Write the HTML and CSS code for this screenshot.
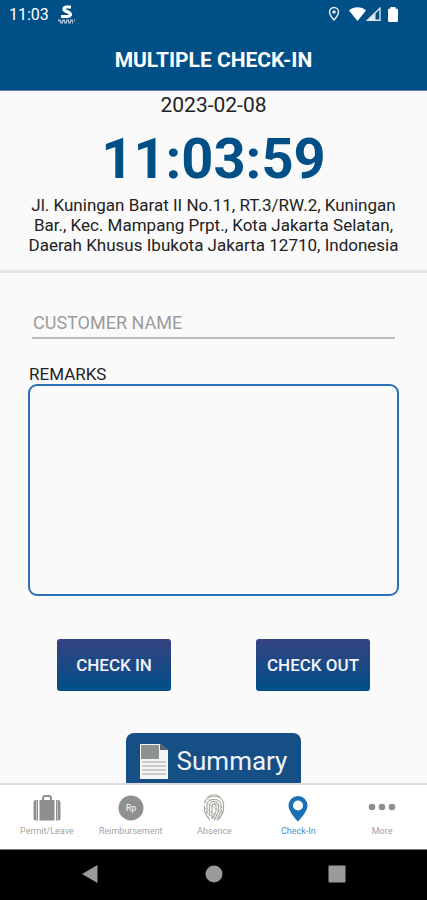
FILE: index.html
```html
<!DOCTYPE html>
<html lang="en">

<head>
  <meta charset="UTF-8">
  <meta name="viewport" content="width=device-width, initial-scale=1.0">
  <title>Multiple Check-In</title>

  <link rel="stylesheet" href="styles.css">
</head>

<body>
  <header>
    <div class="status-bar">
      <span>11:03</span>
      <svg class="app-logo" width="18" height="20" viewBox="0 0 18 20">
        <path d="M13 3H8.500C5.500 3 5 6 8 7.200L11 8.500C13.500 10 12.500 12.500 9.500 12.500H3" fill="none" stroke="#fff" stroke-width="3.200" />
        <path d="M0 16.500h17M2 18.500h13" stroke="#9fb8d3" stroke-width="2" stroke-dasharray="3 1" />
      </svg>
      <div class="status-icons">
        <svg width="12" height="16" viewBox="0 0 12 16">
          <path d="M6 1.500a4.500 4.500 0 0 0-4.500 4.500C1.500 9 6 14 6 14s4.500-5 4.500-8A4.500 4.500 0 0 0 6 1.500z" fill="none" stroke="#e3ebf3" stroke-width="1.500" />
          <circle cx="6" cy="6" r="1.800" fill="#e3ebf3" />
        </svg>
        <svg class="wifi" width="17" height="14" viewBox="0 0 17 14">
          <path d="M8.500 14L0 3.500C4.500-.8 12.500-.8 17 3.500z" fill="#fff" />
        </svg>
        <svg width="15" height="14" viewBox="0 0 15 14">
          <path d="M1.500 13.300L14 1.200v12.100z" fill="none" stroke="#dbe5ef" stroke-width="1.400" />
          <path d="M1 13.500L9.500 5v8.500z" fill="#dbe5ef" />
        </svg>
        <svg class="battery" width="10" height="15" viewBox="0 0 10 15">
          <path d="M2.500 0h5v1.500h1Q10 1.500 10 3v10.500Q10 15 8.500 15h-7Q0 15 0 13.500V3Q0 1.500 1.500 1.500h1z" fill="#fff" />
        </svg>
      </div>
    </div>
    <h1>MULTIPLE CHECK-IN</h1>
  </header>

  <main>
    <section class="info">
      <p class="date">2023-02-08</p>
      <p class="clock">11:03:59</p>
      <p class="address">Jl. Kuningan Barat II No.11, RT.3/RW.2, Kuningan Bar., Kec. Mampang Prpt., Kota Jakarta Selatan, Daerah Khusus Ibukota Jakarta 12710, Indonesia</p>
    </section>

    <form>
      <input type="text" name="customer" id="customer" placeholder="CUSTOMER NAME" aria-label="Customer name" />
      <label for="remarks">REMARKS</label>
      <textarea name="remarks" id="remarks"></textarea>
      <div class="actions">
        <button type="button">CHECK IN</button>
        <button type="button">CHECK OUT</button>
      </div>
      <button type="button" class="summary">
        <svg width="28" height="35" viewBox="0 0 28 35">
          <path d="M0 0h20l8 6v29H0z" fill="#f4f4f4" />
          <path d="M20 0l8 6h-8z" fill="#55616d" />
          <path d="M1 1h18v14H1z" fill="#8d918f" />
          <path d="M2 18h24M2 22h24M2 26h24M2 30h24" stroke="#bdbdbd" stroke-width="1.500" />
        </svg>
        Summary
      </button>
    </form>
  </main>

  <nav class="tabs">
    <a href="#permit">
      <svg width="28" height="28" viewBox="0 0 28 28">
        <path d="M10 7V4.500Q10 2 12 2h4Q18 2 18 4.500V7" fill="none" stroke="#8f8f8f" stroke-width="2" />
        <path d="M6.500 6h15v20.500h-15z" fill="#8f8f8f" />
        <path d="M5 6v20.500H3Q.5 26.500 .5 24V8.500Q.5 6 3 6zM23 6v20.500h2q2.500 0 2.500-2.500V8.500Q27.500 6 25 6z" fill="#8f8f8f" />
        <path d="M3.500 6.500v20M24.500 6.500v20" stroke="#c4c4c4" />
      </svg>
      Permit/Leave
    </a>
    <a href="#reimbursement">
      <svg width="28" height="28" viewBox="0 0 28 28">
        <circle cx="14" cy="14" r="12.500" fill="#8f8f8f" />
        <text class="rp" x="14" y="17" text-anchor="middle">Rp</text>
      </svg>
      Reimbursement
    </a>
    <a href="#absence">
      <svg width="28" height="28" viewBox="0 0 28 28">
        <g fill="none" stroke="#aeaba4" stroke-width="1.200" stroke-linecap="round">
          <path d="M8 3Q14-1.500 20 3" />
          <path d="M4.500 9C7 0 21 0 23.500 9v7Q22 22 18 25.500" />
          <path d="M4.500 12v5Q6 22 9.500 25.500" />
          <path d="M7 19V11C7 3.500 21 3.500 21 11v6l-4 9" />
          <path d="M9.500 22V12C9.500 6 18.500 6 18.500 12v5l-4 9" />
          <path d="M12 25V12c0-2.500 4-2.500 4 0v5l-3 7" />
          <path d="M5 8l18 11M5 14l14 9M8 5l15 9M6 18l10 7" stroke-width=".7" />
        </g>
      </svg>
      Absence
    </a>
    <a href="#check-in" class="active">
      <svg width="28" height="28" viewBox="0 0 28 28">
        <path d="M14 2a9.500 9.500 0 0 0-9.500 9.500C4.500 18 14 27.500 14 27.500s9.500-9.500 9.500-16A9.500 9.500 0 0 0 14 2zm0 4.500a5 5 0 1 1 0 10 5 5 0 0 1 0-10z" fill="#1a6fb5" />
      </svg>
      Check-In
    </a>
    <a href="#more">
      <svg width="28" height="28" viewBox="0 0 28 28">
        <g fill="#8f8f8f">
          <circle cx="4" cy="13" r="3.300" />
          <circle cx="14" cy="13" r="3.300" />
          <circle cx="24" cy="13" r="3.300" />
        </g>
      </svg>
      More
    </a>
  </nav>

  <footer class="system-nav">
    <button type="button" aria-label="Back">
      <svg width="20" height="20" viewBox="0 0 20 20">
        <path d="M1 10L16.500 1v18z" fill="#9b9b9b" />
      </svg>
    </button>
    <button type="button" aria-label="Home">
      <svg width="20" height="20" viewBox="0 0 20 20">
        <circle cx="10" cy="10" r="8.500" fill="#9b9b9b" />
      </svg>
    </button>
    <button type="button" aria-label="Recent apps">
      <svg width="20" height="20" viewBox="0 0 20 20">
        <rect x="1.500" y="1.500" width="17" height="17" rx="1" fill="#9b9b9b" />
      </svg>
    </button>
  </footer>
</body>

</html>
```
FILE: styles.css
```css
* {
  box-sizing: border-box;
}

body {
  background: #fafafa;
  color: #222;
  display: flex;
  flex-direction: column;
  font-family: Roboto, "Liberation Sans", sans-serif;
  height: 100vh;
  margin: 0;
}

button,
input,
textarea {
  font-family: inherit;
}

button {
  border: none;
  cursor: pointer;
}

header {
  background: #004f87;
  border-bottom: 1px solid #5f7fae;
  color: #fff;
}

.status-bar {
  align-items: center;
  display: flex;
  font-size: 16px;
  gap: 9px;
  height: 28px;
  padding: 0 29px 0 9px;
}

.status-icons {
  align-items: center;
  display: flex;
  margin-left: auto;
}

.wifi {
  margin-left: 9px;
}

.battery {
  margin-left: 7px;
}

h1 {
  font-size: 21px;
  font-weight: 700;
  line-height: 26px;
  margin: 0;
  padding: 19px 0 17px;
  text-align: center;
}

main {
  flex: 1;
  min-height: 0;
  overflow: hidden;
}

.info {
  border-bottom: 3px solid #e6e6e6;
  padding: 2px 24px 15px;
  text-align: center;
}

.info p {
  margin: 0;
}

.date {
  font-size: 21px;
  line-height: 25px;
}

.info .clock {
  color: #004f87;
  font-size: 56px;
  font-weight: 700;
  line-height: 66px;
  margin: 8px 0 3px;
}

.address {
  font-size: 17px;
  line-height: 20px;
}

form {
  display: flex;
  flex-direction: column;
  padding: 34px 28px 0;
}

input {
  background: none;
  border: none;
  border-bottom: 2px solid #bdbdbd;
  font-size: 18px;
  height: 32px;
  margin: 0 4px 25px;
  padding: 0 1px;
}

input::placeholder {
  color: #9c9c9c;
}

label {
  font-size: 17px;
  line-height: 20px;
  padding-left: 1px;
}

textarea {
  background: none;
  border: 2px solid #2a70b5;
  border-radius: 9px;
  font-size: 17px;
  height: 212px;
  padding: 8px;
  resize: none;
}

.actions {
  display: flex;
  justify-content: space-between;
  padding: 43px 29px 42px;
}

.actions button {
  background: linear-gradient(#364383, #004f87);
  border-radius: 3px;
  color: #f2f4fa;
  font-size: 17px;
  font-weight: 500;
  height: 52px;
  padding: 0;
  width: 114px;
}

.summary {
  align-items: center;
  align-self: center;
  background: #164f86;
  border-radius: 8px;
  color: #eef3fa;
  display: flex;
  font-size: 26px;
  gap: 9px;
  height: 56px;
  padding: 0 14px;
}

.tabs {
  background: #fff;
  border-top: 2px solid #dcdcdc;
  display: flex;
  height: 66px;
  padding: 9px 3px 0 5px;
}

.tabs a {
  align-items: center;
  color: #a3a3a3;
  display: flex;
  flex: 1 1 0;
  flex-direction: column;
  font-size: 9px;
  gap: 3px;
  line-height: 12px;
  min-width: 0;
  text-decoration: none;
}

.tabs .active {
  color: #4a8bd0;
}

.rp {
  fill: #e8e8e8;
  font-size: 9px;
  font-weight: 500;
}

.system-nav {
  background: #000;
  border-top: 1px solid #777;
  display: flex;
  height: 51px;
  justify-content: center;
}

.system-nav button {
  background: none;
  padding: 0;
  width: 123px;
}
```
